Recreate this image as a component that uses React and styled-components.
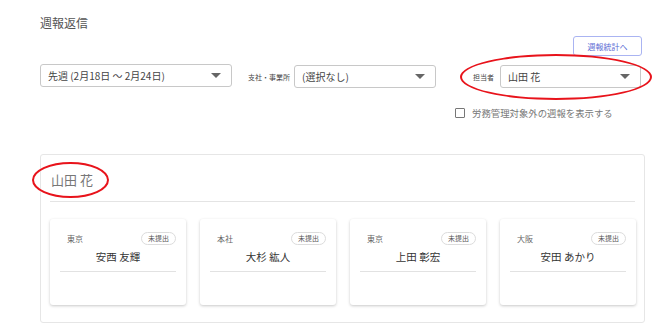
import styled, { createGlobalStyle } from 'styled-components';

const GlobalStyle = createGlobalStyle`
  body {
    margin: 0;
    background: #ffffff;
    font-family: "Noto Sans CJK JP", "Noto Sans", sans-serif;
    color: #444;
  }
`;

const members = [
  { office: '東京', name: '安西 友輝' },
  { office: '本社', name: '大杉 紘人' },
  { office: '東京', name: '上田 彰宏' },
  { office: '大阪', name: '安田 あかり' }
];

const Page = styled.div`
  width: 670px;
  height: 333px;
  box-sizing: border-box;
  padding: 14px 25px 0 40px;
  overflow: hidden;
`;

const Title = styled.h1`
  margin: 0;
  font-size: 12px;
  font-weight: 400;
  line-height: 18px;
  color: #555;
`;

const ToolRow = styled.div`
  display: flex;
  justify-content: flex-end;
  margin-top: 4px;
  padding-right: 3px;
`;

const StatsButton = styled.button`
  width: 69px;
  height: 20px;
  border: 1px solid #aab4f2;
  border-radius: 3px;
  background: #fff;
  color: #5a6bd4;
  font-family: inherit;
  font-size: 8px;
  padding: 0;
  cursor: pointer;
`;

const FilterRow = styled.div`
  display: flex;
  align-items: center;
  margin-top: 9px;
`;

const Field = styled.div`
  display: flex;
  align-items: center;
  gap: ${(p) => p.$gap || 4}px;
  margin-left: ${(p) => p.$offset || 0}px;
  position: relative;
`;

const Label = styled.span`
  font-size: 7px;
  color: #444;
  white-space: nowrap;
`;

const Select = styled.div`
  width: ${(p) => p.$width}px;
  height: 23px;
  box-sizing: border-box;
  border: 1px solid #c8c8c8;
  border-radius: 3px;
  display: flex;
  align-items: center;
  justify-content: space-between;
  padding: 0 10px 0 7px;
  font-size: 10px;
  color: #444;
  margin-top: ${(p) => p.$shift || 0}px;
  background: #fff;
`;

const Arrow = styled.span`
  width: 0;
  height: 0;
  border-left: 5px solid transparent;
  border-right: 5px solid transparent;
  border-top: 5px solid #666;
`;

const RedRing = styled.div`
  position: absolute;
  left: ${(p) => p.$l}px;
  right: ${(p) => p.$r}px;
  top: ${(p) => p.$t}px;
  bottom: ${(p) => p.$b}px;
  border: 2px solid #e8131b;
  border-radius: 50%;
  pointer-events: none;
`;

const CheckRow = styled.label`
  display: flex;
  align-items: center;
  gap: 7px;
  margin-top: 18px;
  margin-left: 415px;
  font-size: 9.4px;
  color: #777;
`;

const Box = styled.span`
  width: 10px;
  height: 10px;
  box-sizing: border-box;
  border: 1.5px solid #777;
  border-radius: 1px;
`;

const Panel = styled.section`
  margin-top: 34px;
  border: 1px solid #e6e6e6;
  border-radius: 3px;
  padding: 11px 9px 17px 9px;
`;

const PanelHead = styled.div`
  position: relative;
  display: inline-block;
  padding-left: 1px;
`;

const PanelTitle = styled.h2`
  margin: 0;
  font-size: 13px;
  font-weight: 400;
  line-height: 20px;
  color: #777;
`;

const Divider = styled.div`
  height: 1px;
  background: #e4e4e4;
  margin-top: 11px;
`;

const CardGrid = styled.div`
  display: grid;
  grid-template-columns: repeat(4, 136px);
  gap: 14px;
  margin-top: 17px;
`;

const Card = styled.div`
  height: 86px;
  box-sizing: border-box;
  background: #fff;
  border-radius: 3px;
  box-shadow: 0 1px 3px rgba(0, 0, 0, 0.22);
  padding: 13px 10px 0 10px;
`;

const CardTop = styled.div`
  display: flex;
  justify-content: space-between;
  align-items: center;
  padding-left: 7px;
`;

const Office = styled.span`
  font-size: 8px;
  color: #666;
`;

const Badge = styled.span`
  height: 13px;
  box-sizing: border-box;
  padding: 0 6px;
  border: 1px solid #dcdcdc;
  border-radius: 7px;
  font-size: 7px;
  line-height: 11px;
  color: #555;
`;

const Name = styled.div`
  text-align: center;
  font-size: 10.5px;
  font-weight: 400;
  color: #333;
  line-height: 14px;
  margin-top: 5px;
`;

const CardLine = styled.div`
  height: 1px;
  background: #e2e2e2;
  margin-top: 7px;
`;

export default function App() {
  return (
    <>
      <GlobalStyle />
      <Page>
        <Title>週報返信</Title>
        <ToolRow>
          <StatsButton>週報統計へ</StatsButton>
        </ToolRow>
        <FilterRow>
          <Select $width={192} $shift={-2}>
            <span>先週 (2月18日 〜 2月24日)</span>
            <Arrow />
          </Select>
          <Field $offset={16}>
            <Label>支社・事業所</Label>
            <Select $width={142}>
              <span>(選択なし)</span>
              <Arrow />
            </Select>
          </Field>
          <Field $offset={37} $gap={6}>
            <Label>担当者</Label>
            <Select $width={141}>
              <span>山田 花</span>
              <Arrow />
            </Select>
            <RedRing $l={-13} $r={-11} $t={-11} $b={-12} />
          </Field>
        </FilterRow>
        <CheckRow>
          <Box />
          <span>労務管理対象外の週報を表示する</span>
        </CheckRow>
        <Panel>
          <PanelHead>
            <PanelTitle>山田 花</PanelTitle>
            <RedRing $l={-18} $r={-16} $t={-8} $b={-8} />
          </PanelHead>
          <Divider />
          <CardGrid>
            {members.map((m) => (
              <Card key={m.name}>
                <CardTop>
                  <Office>{m.office}</Office>
                  <Badge>未提出</Badge>
                </CardTop>
                <Name>{m.name}</Name>
                <CardLine />
              </Card>
            ))}
          </CardGrid>
        </Panel>
      </Page>
    </>
  );
}
